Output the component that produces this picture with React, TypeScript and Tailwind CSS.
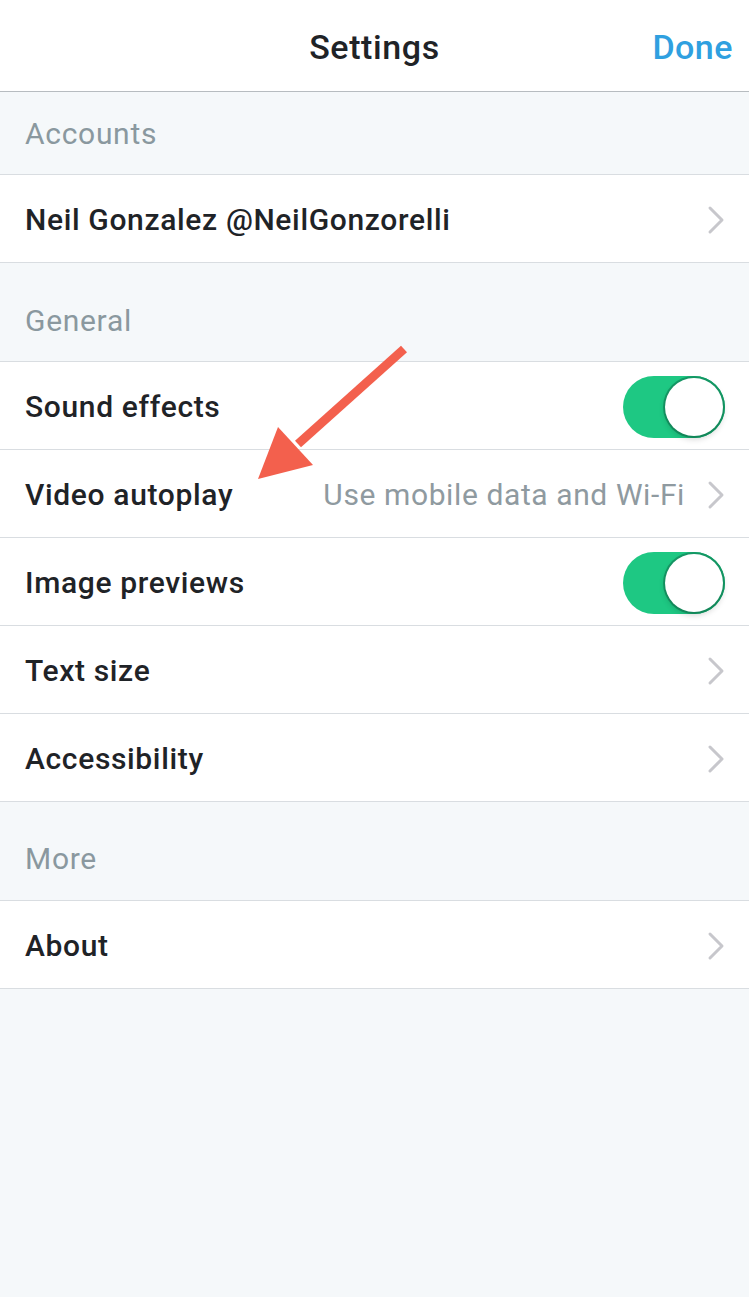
import React from 'react';

const font = { fontFamily: '"Roboto", "Noto Sans", "Liberation Sans", sans-serif' };

function Chevron() {
    return (
        <svg width="18" height="30" viewBox="0 0 18 30" className="shrink-0">
            <path d="M3 3 L15 15 L3 27" fill="none" stroke="#c7c7cc" strokeWidth="3" strokeLinecap="round" strokeLinejoin="round" />
        </svg>
    );
}

function Toggle() {
    return (
        <div className="relative w-[102px] h-[62px] rounded-full bg-[#1ec883] shrink-0">
            <div className="absolute right-0 top-0 w-[62px] h-[62px] rounded-full bg-[#159a66]"></div>
            <div className="absolute right-[2px] top-[2px] w-[58px] h-[58px] rounded-full bg-white shadow-[0_3px_6px_rgba(0,0,0,0.18)]"></div>
        </div>
    );
}

function SectionHeader({ title, className }: { title: string; className: string }) {
    return (
        <div className={`flex items-end px-[25px] border-b border-[#d9dde1] ${className}`}>
            <span className="text-[30px] leading-[40px] tracking-[0.7px] text-[#8a989f]">{title}</span>
        </div>
    );
}

function Row({ label, detail, right }: { label: string; detail?: string; right?: React.ReactNode }) {
    return (
        <div className="flex items-center h-[88px] pl-[25px] pr-[24px] pt-[2px] bg-white border-b border-[#d9dde1]">
            <span className="flex-1 text-[30px] tracking-[0.65px] font-medium text-[#1f2327]">{label}</span>
            {detail && <span className="text-[30px] tracking-[0.6px] text-[#8f9aa0] mr-[22px]">{detail}</span>}
            {right ?? <Chevron />}
        </div>
    );
}

export default function App() {
    return (
        <div className="relative min-h-[1297px] bg-[#f5f8fa]" style={font}>
            <div className="flex items-center justify-center relative h-[92px] pt-[4px] bg-white border-b border-[#b7bcc0]">
                <span className="text-[34px] tracking-[0.6px] font-medium text-[#1f2327]">Settings</span>
                <span className="absolute right-[16px] text-[34px] tracking-[0.5px] font-medium text-[#2fa0e0]">Done</span>
            </div>

            <SectionHeader title="Accounts" className="h-[83px] pb-[20px]" />
            <Row label="Neil Gonzalez @NeilGonzorelli" />

            <SectionHeader title="General" className="h-[99px] pb-[20px]" />
            <Row label="Sound effects" right={<Toggle />} />
            <Row label="Video autoplay" detail="Use mobile data and Wi-Fi" />
            <Row label="Image previews" right={<Toggle />} />
            <Row label="Text size" />
            <Row label="Accessibility" />

            <SectionHeader title="More" className="h-[99px] pb-[21px]" />
            <Row label="About" />

            <svg className="absolute left-0 top-0 pointer-events-none" width="749" height="1297">
                <line x1="404" y1="349" x2="298" y2="444" stroke="#f3604d" strokeWidth="9" />
                <polygon points="258,479 278,427 313,465" fill="#f3604d" />
            </svg>
        </div>
    );
}
